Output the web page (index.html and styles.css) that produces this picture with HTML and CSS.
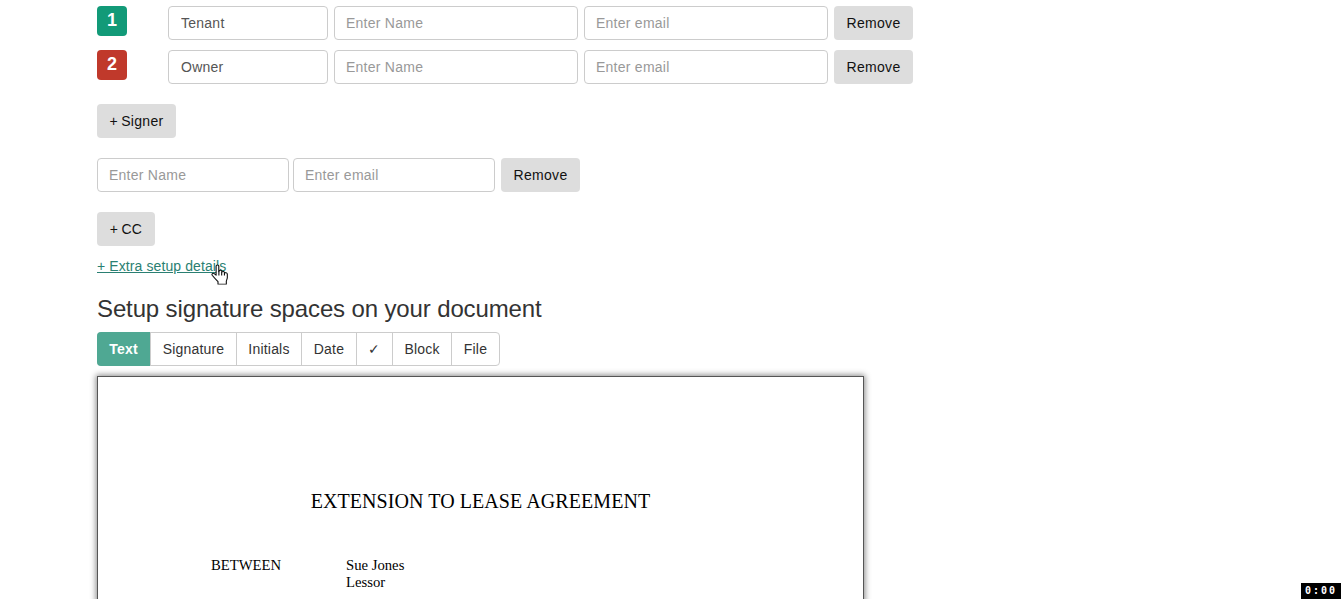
FILE: index.html
```html
<!DOCTYPE html>
<html lang="en">
<head>
<meta charset="utf-8">
<title>Setup document</title>
<link rel="stylesheet" href="styles.css">
</head>
<body>
<main class="page">
  <div class="signer-row">
    <span class="badge badge-green">1</span>
    <input class="field field-role" value="Tenant">
    <input class="field field-wide" placeholder="Enter Name">
    <input class="field field-wide" placeholder="Enter email">
    <button class="btn">Remove</button>
  </div>
  <div class="signer-row">
    <span class="badge badge-red">2</span>
    <input class="field field-role" value="Owner">
    <input class="field field-wide" placeholder="Enter Name">
    <input class="field field-wide" placeholder="Enter email">
    <button class="btn">Remove</button>
  </div>
  <button class="btn btn-add btn-signer">+ Signer</button>
  <div class="cc-row">
    <input class="field field-cc-name" placeholder="Enter Name">
    <input class="field field-cc-email" placeholder="Enter email">
    <button class="btn btn-cc-remove">Remove</button>
  </div>
  <button class="btn btn-add btn-cc">+ CC</button>
  <div class="extra">
    <a class="extra-link" href="#">+ Extra setup details</a>
    <svg class="cursor" width="20" height="23" viewBox="0 0 18 24" preserveAspectRatio="none" aria-hidden="true">
      <path d="M5.500 2.200c0-1.500 2.400-1.500 2.400 0v6l.4-1.300c1-.7 2.100-.4 2.300.7l.2.7c.8-.8 2-.5 2.200.6l.1.6c1-.7 2.300-.2 2.500 1.100.3 2.600 0 5-.9 7.200v3.200H7.200v-2.600c-1.500-1.800-3.300-3.900-5.200-6.700-.9-1.400.6-2.700 1.800-1.700l1.700 1.700z" fill="#fff" stroke="#111" stroke-width="1" stroke-linejoin="round"/>
      <path d="M8 7.500v4.500M10.500 8v4M13 9v3" stroke="#111" stroke-width="1" fill="none"/>
    </svg>
  </div>
  <h2 class="heading">Setup signature spaces on your document</h2>
  <div class="tabs">
    <span class="tab tab-active">Text</span>
    <span class="tab">Signature</span>
    <span class="tab">Initials</span>
    <span class="tab">Date</span>
    <span class="tab">✓</span>
    <span class="tab">Block</span>
    <span class="tab">File</span>
  </div>
  <section class="doc">
    <h1 class="doc-title">EXTENSION TO LEASE AGREEMENT</h1>
    <div class="doc-parties">
      <div>BETWEEN</div>
      <div>Sue Jones<br>Lessor</div>
    </div>
  </section>
</main>
<div class="timer">0:00</div>
</body>
</html>
```
FILE: styles.css
```css
* { box-sizing: border-box; }
html, body { height: 100%; overflow: hidden; }
body {
  margin: 0;
  font-family: "Liberation Sans", Arial, sans-serif;
  font-size: 14px;
  color: #333;
  background: #fff;
}
.page { padding: 6px 0 0 97px; width: 1000px; }
.signer-row { display: flex; height: 34px; margin-bottom: 10px; }
.badge {
  flex: none;
  width: 30px;
  height: 30px;
  margin-right: 41px;
  border-radius: 4px;
  color: #fff;
  font-weight: bold;
  font-size: 18px;
  line-height: 28px;
  text-align: center;
}
.badge-green { background: #129a78; }
.badge-red { background: #c0392b; }
.field {
  flex: none;
  height: 34px;
  padding: 6px 11px;
  border: 1px solid #ccc;
  border-radius: 4px;
  font: 14px "Liberation Sans", Arial, sans-serif;
  letter-spacing: .25px;
  color: #555;
  background: #fff;
  outline: none;
}
.field::placeholder { color: #999; opacity: 1; }
.field-role { width: 160px; margin-right: 6px; padding-left: 12px; }
.field-wide { width: 244px; margin-right: 6px; }
.field-cc-name { width: 192px; margin-right: 4px; }
.field-cc-email { width: 202px; margin-right: 6px; }
.btn {
  display: block;
  flex: none;
  height: 34px;
  width: 79px;
  padding: 0;
  border: 0;
  border-radius: 4px;
  background: #ddd;
  color: #111;
  font: 14px "Liberation Sans", Arial, sans-serif;
  letter-spacing: .3px;
  word-spacing: -1px;
}
.btn-add { margin-top: 20px; }
.btn-cc { width: 58px; }
.cc-row { display: flex; margin-top: 20px; }
.extra { position: relative; margin-top: 12px; height: 16px; line-height: 16px; font-size: 14px; letter-spacing: .1px; }
.extra-link { color: #2a7f72; text-decoration: underline; }
.cursor { position: absolute; left: 113px; top: 6px; }
.heading {
  margin: 20px 0 0;
  font-size: 24px;
  font-weight: normal;
  line-height: 30px;
  letter-spacing: -.13px;
  color: #333;
}
.tabs {
  display: grid;
  grid-template-columns: 52px 86px 65px 55px 36px 59px 48px;
  width: 403px;
  height: 34px;
  margin-top: 8px;
  border: 1px solid #ccc;
  border-radius: 4px;
}
.tab {
  line-height: 32px;
  border-left: 1px solid #ccc;
  text-align: center;
  letter-spacing: .2px;
}
.tab:first-child { border-left: 0; }
.tab-active {
  margin: -1px 0 -1px -1px;
  line-height: 34px;
  background: #4fa893;
  color: #fff;
  font-weight: bold;
  border-radius: 4px 0 0 4px;
}
.doc {
  width: 767px;
  height: 1000px;
  margin-top: 10px;
  padding-top: 112px;
  border: 1px solid #555;
  box-shadow: 0 0 6px 1px #888;
  color: #000;
  font-family: "Liberation Serif", "Times New Roman", serif;
}
.doc-title {
  margin: 0;
  text-align: center;
  font-size: 20px;
  font-weight: normal;
  line-height: 24px;
  letter-spacing: .07px;
}
.doc-parties {
  display: grid;
  grid-template-columns: 135px auto;
  margin-top: 44px;
  padding-left: 113px;
  font-size: 14.7px;
  line-height: 17px;
}
.timer {
  position: fixed;
  right: 0;
  bottom: 0;
  width: 40px;
  height: 16px;
  background: #000;
  color: #fff;
  font: bold 10px/16px "DejaVu Sans Mono", monospace;
  letter-spacing: 2px;
  text-align: center;
}
```
